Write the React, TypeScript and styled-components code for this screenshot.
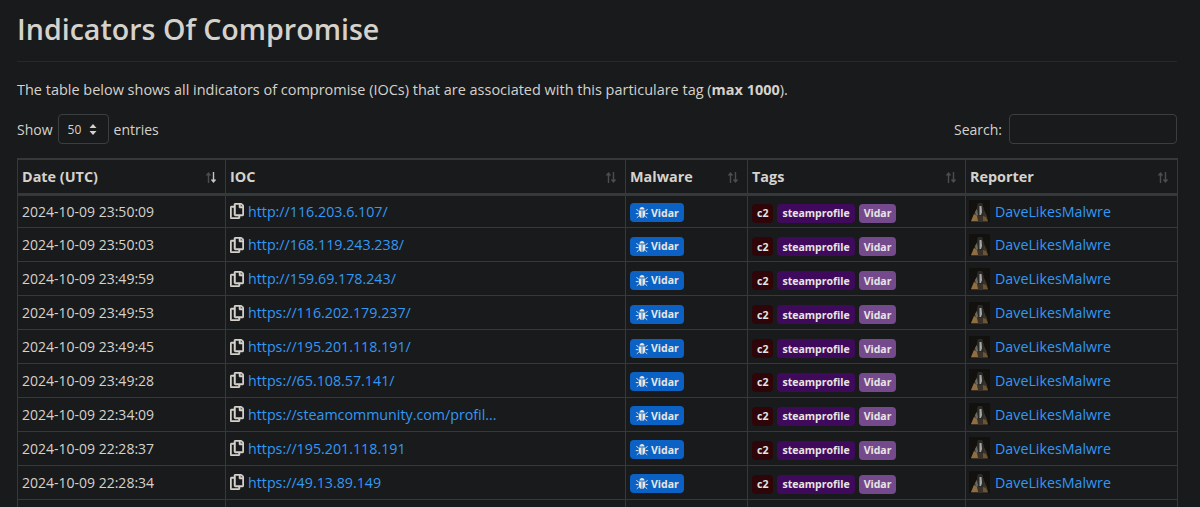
import React from 'react';
import styled, { createGlobalStyle } from 'styled-components';
import { FaRegCopy } from 'react-icons/fa';

const GlobalStyle = createGlobalStyle`
  html, body {
    margin: 0;
    height: 507px;
    overflow: hidden;
    background: #191a1c;
  }
  body {
    color: #d5d2cc;
    font-family: "Open Sans", "Noto Sans", sans-serif;
    font-size: 14px;
  }
`;

const Page = styled.div`
  padding: 0 23px 0 17px;
`;

const Title = styled.h1`
  margin: 0;
  padding: 9px 0 12px;
  font-size: 28.6px;
  line-height: 40px;
  font-weight: 600;
  color: #d5d2cc;
  border-bottom: 1px solid #26292b;
`;

const Intro = styled.p`
  margin: 17px 0 0;
  line-height: 21px;
  font-size: 14.47px;
`;

const Controls = styled.div`
  display: flex;
  justify-content: space-between;
  align-items: center;
  margin-top: 14px;
  height: 30px;
`;

const Length = styled.div`
  display: flex;
  align-items: center;
  gap: 5px;
`;

const PageSelect = styled.div`
  box-sizing: border-box;
  width: 51px;
  height: 30px;
  display: flex;
  align-items: center;
  gap: 8px;
  padding-left: 9px;
  border: 1px solid #3a3e41;
  border-radius: 4px;
  font-size: 12px;
`;

const SearchBox = styled.label`
  display: flex;
  align-items: center;
  gap: 7px;
`;

const SearchInput = styled.div`
  box-sizing: border-box;
  width: 168px;
  height: 30px;
  border: 1px solid #3a3e41;
  border-radius: 4px;
`;

const Table = styled.table`
  width: 1160px;
  margin-top: 14px;
  border-collapse: collapse;
  table-layout: fixed;
  border-top: 2px solid #35393b;
`;

const HeadCell = styled.th<{ $width: number }>`
  position: relative;
  box-sizing: border-box;
  width: ${(p) => p.$width}px;
  height: 35px;
  padding: 0 4px;
  text-align: left;
  font-size: 14.4px;
  font-weight: 700;
  border: 1px solid #35393b;
  border-top: 0;
  border-bottom: 3px solid #35393b;
`;

const SortMark = styled.svg`
  position: absolute;
  right: 8px;
  top: 11px;
`;

const Cell = styled.td`
  box-sizing: border-box;
  height: 33.9px;
  padding: 0 4px;
  border: 1px solid #35393b;
  white-space: nowrap;
  overflow: hidden;
`;

const CellRow = styled.div`
  display: flex;
  align-items: center;
  gap: 4px;
`;

const ReporterRow = styled(CellRow)`
  gap: 5px;
  margin-left: -1px;
`;

const CopyIcon = styled(FaRegCopy)`
  width: 14px;
  height: 16px;
  color: #d5d2cc;
  stroke: #d5d2cc;
  stroke-width: 16;
  flex: none;
`;

const LinkText = styled.a`
  color: #3298f5;
  font-size: 14.25px;
`;

const Badge = styled.span<{ $bg: string }>`
  display: inline-flex;
  align-items: center;
  gap: 2px;
  height: 19px;
  padding: 0 5px;
  border-radius: 4px;
  background: ${(p) => p.$bg};
  color: #e8e6e3;
  font-size: 10.5px;
  font-weight: 700;
`;

const MalwareBadge = styled(Badge)`
  position: relative;
  top: 2px;
`;

const Tags = styled.div`
  display: flex;
  align-items: center;
  gap: 4px;
  position: relative;
  top: 2px;
`;

const Sort = ({ active }: { active?: boolean }) => (
  <SortMark width="12" height="13" viewBox="0 0 12 13" fill="none" strokeWidth="1.4">
    <path d="M3.5 12V2M1.5 4.5l2-2.5 2 2.5" stroke="#4a4e50" />
    <path d="M8.5 1v10M6.5 8.5l2 2.5 2-2.5" stroke={active ? '#c8c5bf' : '#4a4e50'} />
  </SortMark>
);

const Bug = () => (
  <svg width="14" height="13" viewBox="0 0 14 13" fill="none">
    <path d="M4.5 3.6C4.5 1.9 5.6 1 7 1s2.5.9 2.5 2.6z" fill="#e8e6e3" />
    <path d="M3.8 4.6h6.4v3.6c0 2.4-1.4 3.8-3.2 3.8s-3.2-1.4-3.2-3.8z" fill="#e8e6e3" />
    <path d="M7 4.6V12" stroke="#0b62c4" strokeWidth=".9" />
    <path
      d="M3.6 5L1.4 3.4M10.4 5l2.2-1.6M3.4 7.6H.8M10.6 7.6h2.6M3.8 10l-2 1.8M10.2 10l2 1.8"
      stroke="#e8e6e3"
      strokeWidth="1"
    />
  </svg>
);

const Avatar = () => (
  <svg width="21" height="22" viewBox="0 0 21 22" style={{ flex: 'none' }}>
    <rect width="21" height="22" fill="#12110e" />
    <path d="M2 22 5 14l3-6 1-5h4l2 7 3 6 1 6z" fill="#3a3229" />
    <path d="M9 3h4l2 7-1 6h-5l-1-7z" fill="#2a2a28" />
    <path d="M10.5 6h2l.5 6-1 3h-1.5z" fill="#a7a8a4" />
    <path d="M2 21l3-7 3 2 1 5z" fill="#8f6f42" />
    <path d="M14 16l3 1 2 4h-5z" fill="#6d5432" />
    <path d="M6 12l2-3 1 6-2 1z" fill="#6b6a60" />
  </svg>
);

type Row = { date: string; ioc: string };

const rows: Row[] = [
  { date: '2024-10-09 23:50:09', ioc: 'http://116.203.6.107/' },
  { date: '2024-10-09 23:50:03', ioc: 'http://168.119.243.238/' },
  { date: '2024-10-09 23:49:59', ioc: 'http://159.69.178.243/' },
  { date: '2024-10-09 23:49:53', ioc: 'https://116.202.179.237/' },
  { date: '2024-10-09 23:49:45', ioc: 'https://195.201.118.191/' },
  { date: '2024-10-09 23:49:28', ioc: 'https://65.108.57.141/' },
  { date: '2024-10-09 22:34:09', ioc: 'https://steamcommunity.com/profil...' },
  { date: '2024-10-09 22:28:37', ioc: 'https://195.201.118.191' },
  { date: '2024-10-09 22:28:34', ioc: 'https://49.13.89.149' },
];

const columns = [
  { name: 'Date (UTC)', width: 208, active: true },
  { name: 'IOC', width: 400 },
  { name: 'Malware', width: 122 },
  { name: 'Tags', width: 218 },
  { name: 'Reporter', width: 212 },
];

const App: React.FC = () => (
  <Page>
    <GlobalStyle />
    <Title>Indicators Of Compromise</Title>
    <Intro>
      The table below shows all indicators of compromise (IOCs) that are associated with this particulare tag (
      <b>max 1000</b>).
    </Intro>
    <Controls>
      <Length>
        Show
        <PageSelect>
          50
          <svg width="8" height="11" viewBox="0 0 8 11">
            <path d="M4 0l3.5 4h-7zM4 11L.5 7h7z" fill="#d5d2cc" />
          </svg>
        </PageSelect>
        entries
      </Length>
      <SearchBox>
        Search:
        <SearchInput />
      </SearchBox>
    </Controls>
    <Table>
      <thead>
        <tr>
          {columns.map((c) => (
            <HeadCell key={c.name} $width={c.width}>
              {c.name}
              <Sort active={c.active} />
            </HeadCell>
          ))}
        </tr>
      </thead>
      <tbody>
        {rows.map(({ date, ioc }) => (
          <tr key={date}>
            <Cell>{date}</Cell>
            <Cell>
              <CellRow>
                <CopyIcon />
                <LinkText>{ioc}</LinkText>
              </CellRow>
            </Cell>
            <Cell>
              <MalwareBadge $bg="#0b62c4">
                <Bug />
                Vidar
              </MalwareBadge>
            </Cell>
            <Cell>
              <Tags>
                <Badge $bg="#2e0508">c2</Badge>
                <Badge $bg="#3f0a5c">steamprofile</Badge>
                <Badge $bg="#744a8c">Vidar</Badge>
              </Tags>
            </Cell>
            <Cell>
              <ReporterRow>
                <Avatar />
                <LinkText>DaveLikesMalwre</LinkText>
              </ReporterRow>
            </Cell>
          </tr>
        ))}
        <tr>
          {columns.map((c) => (
            <Cell key={c.name} />
          ))}
        </tr>
      </tbody>
    </Table>
  </Page>
);

export default App;
